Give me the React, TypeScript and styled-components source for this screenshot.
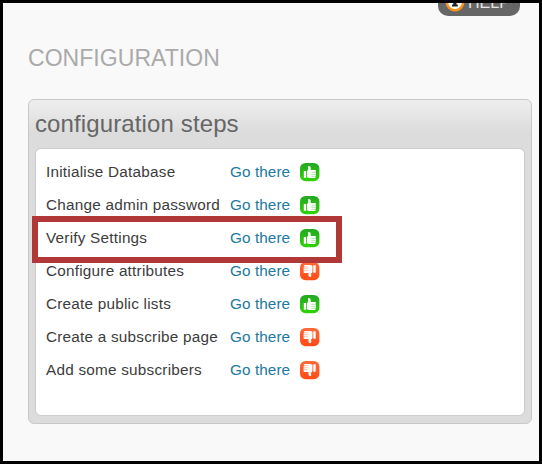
import React from "react";
import styled, { createGlobalStyle } from "styled-components";

const GlobalStyle = createGlobalStyle`
  * { box-sizing: border-box; }
  html, body { margin: 0; padding: 0; }
  body { font-family: "Liberation Sans", Arial, sans-serif; color: #3c3c3c; }
`;

const Page = styled.main`
  width: 542px;
  height: 464px;
  border: 3px solid #000;
  background: #f9f9f9;
  padding: 0 7px 0 25px;
  overflow: hidden;
`;

const TopBar = styled.header`
  display: flex;
  justify-content: flex-end;
  align-items: flex-end;
  height: 13px;
  padding-right: 12px;
`;

const HelpButton = styled.a`
  display: flex;
  flex: none;
  align-items: center;
  width: 82px;
  height: 27px;
  padding: 0 0 0 7px;
  gap: 3px;
  border-radius: 10px;
  background: #666;
  color: #e6e6e6;
  font-size: 16px;
  line-height: 24px;
  text-decoration: none;
  svg { flex: none; margin-bottom: 2px; }
`;

const PageTitle = styled.h1`
  margin: 29px 0 0;
  height: 27px;
  font-size: 23px;
  line-height: 27px;
  font-weight: 400;
  letter-spacing: 0.05px;
  color: #aaa;
  text-transform: uppercase;
`;

const Panel = styled.section`
  width: 504px;
  height: 325px;
  margin-top: 27px;
  padding: 0 6px 7px;
  display: flex;
  flex-direction: column;
  border: 1px solid #c8c8c8;
  border-radius: 6px;
  background: linear-gradient(#eee 0, #dcdcdc 33px, #dcdcdc 100%);
`;

const PanelTitle = styled.h2`
  margin: 0;
  height: 48px;
  font-size: 24px;
  line-height: 48px;
  font-weight: 400;
  letter-spacing: 0.12px;
  color: #666;
`;

const PanelBody = styled.div`
  flex: 1;
  padding: 6px 10px;
  border: 1px solid #ccc;
  border-radius: 6px;
  background: #fff;
`;

const Steps = styled.ul`
  list-style: none;
  margin: 0;
  padding: 0;
`;

const Step = styled.li`
  position: relative;
  display: grid;
  grid-template-columns: 184px 70px 20px;
  align-items: center;
  height: 33px;
  font-size: 15.3px;
  line-height: 18px;
  letter-spacing: 0.23px;
`;

const StepName = styled.span`
  white-space: nowrap;
`;

const StepLink = styled.a`
  color: #217a9f;
  text-decoration: none;
  letter-spacing: 0.08px;
  white-space: nowrap;
`;

const Highlight = styled.span`
  position: absolute;
  left: -14px;
  top: -5px;
  width: 310px;
  height: 47px;
  border: 6px solid #b23838;
  z-index: 1;
`;

const StatusIcon = styled.svg`
  display: block;
  width: 20px;
  height: 20px;
`;

function Status({ done }: { done: boolean }) {
  return (
    <StatusIcon viewBox="0 0 20 20">
      <defs>
        <linearGradient id="done" x1="0" y1="0" x2="0" y2="1">
          <stop offset="0" stopColor="#24a824" />
          <stop offset="1" stopColor="#30d205" />
        </linearGradient>
        <linearGradient id="todo" x1="0" y1="0" x2="0" y2="1">
          <stop offset="0" stopColor="#ff6a3a" />
          <stop offset="1" stopColor="#ff4b16" />
        </linearGradient>
      </defs>
      <rect x="0" y="1" width="19.4" height="18.2" rx="5.5" fill={done ? "url(#done)" : "url(#todo)"} />
      {done ? (
        <>
          <path
            fill="#fff"
            d="M3.8 8.9h2.4v6.9H3.8zM7 9.2 8.2 7.5V4q2.3-.3 2.5 1.8v2.3h4.4q.9 0 .9.95t-.8.95q.9.1.9 1t-.8 1q.7.2.7 1t-.8 1q.5.3.5 1t-.9 1H9l-2-.8z"
          />
          <path d="M11.4 10.3h4.5M11.4 12.3h4.5M11.4 14.3h4" stroke="#5cc653" strokeWidth=".5" />
        </>
      ) : (
        <>
          <path
            fill="#fff"
            d="M13.3 4.3h2.4v7.4h-2.4zM12.4 11.2l-1.3 1.4V16q-2.4.3-2.6-1.8v-2.3H4.4q-.9 0-.9-.95t.8-.95q-.9-.1-.9-1t.8-1q-.7-.2-.7-1t.8-1q-.5-.3-.5-1t.9-1h5.7l2.1.8z"
          />
          <path d="M8.1 9.7H3.6M8.1 7.7H3.6M8.1 5.7H4" stroke="#ff8a6a" strokeWidth=".5" />
        </>
      )}
    </StatusIcon>
  );
}

const steps = [
  { name: "Initialise Database", done: true },
  { name: "Change admin password", done: true },
  { name: "Verify Settings", done: true, highlighted: true },
  { name: "Configure attributes", done: false },
  { name: "Create public lists", done: true },
  { name: "Create a subscribe page", done: false },
  { name: "Add some subscribers", done: false },
];

export default function App() {
  return (
    <>
      <GlobalStyle />
      <Page>
        <TopBar>
          <HelpButton href="#">
            <svg width="20" height="20" viewBox="0 0 20 20">
              <circle cx="10" cy="10" r="8.2" fill="#fff" stroke="#f7941d" strokeWidth="2.6" />
              <path d="M8.3 8h3.2v4.6h1.3v1.8H7v-1.8h1.3z" fill="#222" />
              <circle cx="10" cy="5.6" r="1.3" fill="#222" />
            </svg>
            HELP
          </HelpButton>
        </TopBar>
        <PageTitle>Configuration</PageTitle>
        <Panel>
          <PanelTitle>configuration steps</PanelTitle>
          <PanelBody>
            <Steps>
              {steps.map((step) => (
                <Step key={step.name}>
                  <StepName>{step.name}</StepName>
                  <StepLink href="#">Go there</StepLink>
                  <Status done={step.done} />
                  {step.highlighted && <Highlight />}
                </Step>
              ))}
            </Steps>
          </PanelBody>
        </Panel>
      </Page>
    </>
  );
}
